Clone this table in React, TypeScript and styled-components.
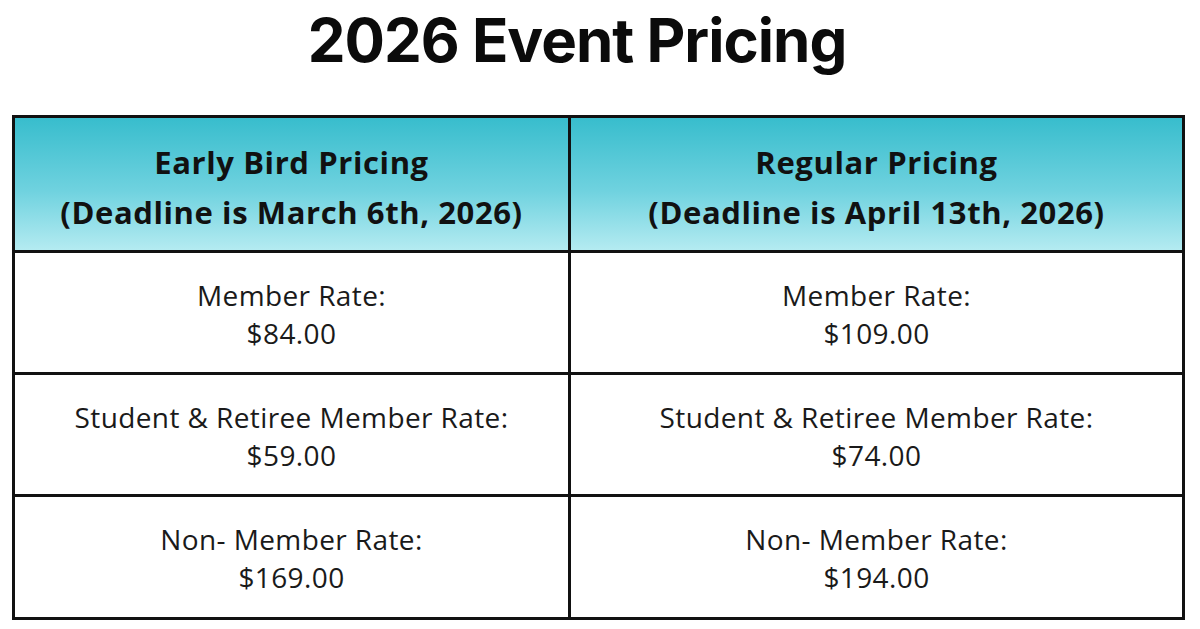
import React from "react";
import styled, {createGlobalStyle} from "styled-components";

const GlobalStyle = createGlobalStyle`
  html, body {
    margin: 0;
    padding: 0;
    background: #ffffff;
  }
`;

const Page = styled.div`
  width: 1200px;
  height: 629px;
  background: #fff;
  display: flex;
  flex-direction: column;
  align-items: flex-start;
  overflow: hidden;
`;

const Title = styled.h1`
  margin: 0;
  align-self: center;
  height: 115px;
  padding: 1px 46px 0 0;
  box-sizing: border-box;
  font-family: "Inter", "Liberation Sans", sans-serif;
  font-weight: 700;
  font-size: 60px;
  letter-spacing: -1px;
  line-height: 78px;
  color: #0b0b0b;
`;

const Table = styled.div`
  margin-left: 12px;
  width: 1173px;
  display: grid;
  grid-template-columns: 556px 1fr;
  grid-template-rows: 135px 122px 122px 120px;
  border: 3px solid #111;
  box-sizing: border-box;
`;

const HeadCell = styled.div<{ $last?: boolean }>`
  display: flex;
  flex-direction: column;
  align-items: center;
  justify-content: center;
  background: linear-gradient(180deg, #38bdcd 0%, #6fd2df 55%, #b4ebf1 100%);
  border-right: ${(p) => (p.$last ? "none" : "3px solid #111")};
  border-bottom: 3px solid #111;
  font-family: "Open Sans", "Noto Sans", sans-serif;
  font-weight: 700;
  font-size: 31px;
  letter-spacing: 0.6px;
  line-height: 50px;
  color: #111;
  padding-top: 6px;
`;

const Cell = styled.div<{ $last?: boolean; $bottom?: boolean }>`
  display: flex;
  flex-direction: column;
  align-items: center;
  justify-content: center;
  border-right: ${(p) => (p.$last ? "none" : "3px solid #111")};
  border-bottom: ${(p) => (p.$bottom ? "none" : "3px solid #111")};
  font-family: "Open Sans", "Noto Sans", sans-serif;
  font-size: 28px;
  letter-spacing: 0.4px;
  line-height: 38px;
  color: #1a1a1a;
  padding-top: 2px;
`;

const rows = [
    ["Member Rate:", "$84.00", "$109.00"],
    ["Student & Retiree Member Rate:", "$59.00", "$74.00"],
    ["Non- Member Rate:", "$169.00", "$194.00"],
];

const App = () => {
    return (
        <Page>
            <GlobalStyle/>
            <Title>2026 Event Pricing</Title>
            <Table>
                <HeadCell>
                    <span>Early Bird Pricing</span>
                    <span>(Deadline is March 6th, 2026)</span>
                </HeadCell>
                <HeadCell $last>
                    <span>Regular Pricing</span>
                    <span>(Deadline is April 13th, 2026)</span>
                </HeadCell>
                {rows.map(([label, early, regular], i) => (
                    <React.Fragment key={label}>
                        <Cell $bottom={i === rows.length - 1}>
                            <span>{label}</span>
                            <span>{early}</span>
                        </Cell>
                        <Cell $last $bottom={i === rows.length - 1}>
                            <span>{label}</span>
                            <span>{regular}</span>
                        </Cell>
                    </React.Fragment>
                ))}
            </Table>
        </Page>
    );
};

export default App;
